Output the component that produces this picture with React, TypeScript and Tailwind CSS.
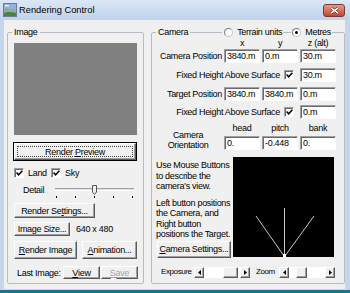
import React from 'react';

const raised =
  'bg-[#f0f0f0] border border-t-white border-l-white border-r-[#5a5a5a] border-b-[#5a5a5a] shadow-[inset_-1px_-1px_0_#a0a0a0]';
const sunken =
  'bg-white border border-t-[#a0a0a0] border-l-[#a0a0a0] border-r-white border-b-white shadow-[inset_1px_1px_0_#696969]';

type BoxProps = { className?: string; children?: React.ReactNode };

const Button: React.FC<BoxProps & { disabled?: boolean }> = ({ className = '', children, disabled }) => (
  <div
    className={`${raised} flex items-center justify-center whitespace-nowrap ${
      disabled ? 'text-[#a0a0a0] [text-shadow:1px_1px_0_#fff]' : ''
    } ${className}`}
  >
    {children}
  </div>
);

const Field: React.FC<{ value: string; className?: string }> = ({ value, className = '' }) => (
  <div className={`${sunken} w-[36px] h-[14px] flex items-center pl-[2px] whitespace-nowrap overflow-hidden ${className}`}>
    {value}
  </div>
);

const Check: React.FC<{ className?: string }> = ({ className = '' }) => (
  <div className={`${sunken} w-[10px] h-[10px] flex items-center justify-center shrink-0 ${className}`}>
    <svg width="7" height="6" viewBox="0 0 7 6">
      <path d="M0.6 2.6 L2.6 4.8 L6.4 0.8" stroke="#000" strokeWidth="1.5" fill="none" />
    </svg>
  </div>
);

const Radio: React.FC<{ checked?: boolean }> = ({ checked }) => (
  <div className="w-[9px] h-[9px] rounded-full bg-white border border-t-[#7a7a7a] border-l-[#7a7a7a] border-r-[#c8c8c8] border-b-[#c8c8c8] flex items-center justify-center shrink-0">
    {checked && <div className="w-[3px] h-[3px] rounded-full bg-black" />}
  </div>
);

const Line: React.FC<{ className?: string }> = ({ className = '' }) => (
  <div className={`h-0 border-t border-[#b5bcc3] ${className}`} />
);

const Arrow: React.FC<{ left?: boolean }> = ({ left }) => (
  <div className={`${raised} w-[10px] h-full flex items-center justify-center shrink-0`}>
    <svg width="3" height="5" viewBox="0 0 3 5">
      <path d={left ? 'M3 0 L0 2.5 L3 5Z' : 'M0 0 L3 2.5 L0 5Z'} fill="#000" />
    </svg>
  </div>
);

const ScrollBar: React.FC<{ lead: string; thumb: string }> = ({ lead, thumb }) => (
  <div className="flex w-[56px] h-[11px] shrink-0">
    <Arrow left />
    <div className="flex-1 flex bg-white">
      <div className={lead} />
      <div className={`${raised} ${thumb}`} />
    </div>
    <Arrow />
  </div>
);

const AppIcon = () => (
  <svg width="14" height="14" viewBox="0 0 14 14">
    <rect x="0.5" y="0.5" width="13" height="13" fill="#8fb3d9" stroke="#6d7f8f" />
    <path d="M1 7 L4 4 L7 7 L9 5 L13 8 V13 H1Z" fill="#9aa3a8" />
    <path d="M1 10 Q5 8 13 10 V13 H1Z" fill="#3f8a3a" />
    <rect x="2" y="2" width="4" height="1.5" fill="#e8f0f8" />
  </svg>
);

export default function App() {
  return (
    <div className="w-[350px] h-[293px] flex flex-col bg-[#c4d6ec] text-black text-[9px] tracking-[-0.3px] leading-[10px] font-['Liberation_Sans',sans-serif] overflow-hidden">
      {/* title bar */}
      <div className="h-[20px] shrink-0 flex items-start bg-linear-to-b from-[#dbe7f6] to-[#bfd3ec]">
        <div className="ml-[3px] mt-[3px]">
          <AppIcon />
        </div>
        <div className="ml-[2px] h-[19px] flex items-center text-[9.3px] tracking-normal">Rendering Control</div>
        <div className="ml-auto mr-[5px] mt-[4px] w-[22px] h-[13px] rounded-[3px] border border-[#7d3a32] bg-linear-to-b from-[#e49a8a] to-[#c4432f] flex items-center justify-center">
          <svg width="9" height="7" viewBox="0 0 9 7">
            <path d="M1 0.8 L8 6.2 M8 0.8 L1 6.2" stroke="#5a231c" strokeWidth="2.6" />
            <path d="M1 0.8 L8 6.2 M8 0.8 L1 6.2" stroke="#fff" strokeWidth="1.5" />
          </svg>
        </div>
      </div>

      {/* client */}
      <div className="h-[269px] ml-[4px] mr-[5px] bg-[#f0f0f0] flex items-start pt-[6px]">
        {/* Image group */}
        <fieldset className="ml-[3px] w-[137px] h-[258px] pl-[6px] border border-[#b5bcc3] rounded-[2px]">
          <legend className="ml-[-2px] px-[2px] h-[12px] leading-[12px]">Image</legend>
          <div className="mt-[5px] w-[123px] h-[92px] bg-[#808080]" />
          <div className="mt-[7px] ml-[-1px] w-[124px] h-[19px] border border-black">
            <div className={`${raised} h-full p-[2px]`}>
              <div className="h-full border border-dotted border-[#444] flex items-center justify-center">
                Render&nbsp;<u>P</u>review
              </div>
            </div>
          </div>
          <div className="mt-[6px] h-[11px] flex items-center">
            <Check />
            <span className="ml-[4px] w-[23px]">Land</span>
            <Check />
            <span className="ml-[4px]">Sky</span>
          </div>
          <div className="mt-[6px] h-[15px] flex items-start">
            <div className="w-[41px] pl-[9px] h-[11px] flex items-center">Detail</div>
            <div className="relative w-[79px] h-[15px]">
              <div className="mt-[4px] h-[3px] border-t border-t-[#a0a0a0] border-b border-b-white bg-[#e3e3e3]" />
              <div className="mt-[5px] px-[1px] flex justify-between">
                <div className="w-[1px] h-[2px] bg-black" />
                <div className="w-[1px] h-[2px] bg-black" />
                <div className="w-[1px] h-[2px] bg-black" />
                <div className="w-[1px] h-[2px] bg-black" />
                <div className="w-[1px] h-[2px] bg-black" />
              </div>
              <svg className="absolute left-[37px] top-[1px]" width="5" height="10" viewBox="0 0 5 10">
                <path d="M0.5 0.5 H4.5 V7 L2.5 9.5 L0.5 7 Z" fill="#f0f0f0" stroke="#555" />
              </svg>
            </div>
          </div>
          <Button className="mt-[4px] w-[81px] h-[15px]">
            Render Se<u>t</u>tings...
          </Button>
          <div className="mt-[4px] h-[14px] flex items-center">
            <Button className="w-[56px] h-[14px]">Image Size...</Button>
            <span className="ml-[6px]">640 x 480</span>
          </div>
          <div className="mt-[5px] h-[18px] flex">
            <Button className="w-[63px] h-[18px]">
              <u>R</u>ender Image
            </Button>
            <Button className="ml-[5px] w-[55px] h-[18px]">
              <u>A</u>nimation...
            </Button>
          </div>
          <div className="mt-[7px] h-[13px] flex items-center">
            <div className="w-[49px] pl-[3px] whitespace-nowrap">Last Image:</div>
            <Button className="w-[37px] h-[13px]">
              <u>V</u>iew
            </Button>
            <Button disabled className="ml-[1px] w-[37px] h-[13px]">
              <u>S</u>ave
            </Button>
          </div>
        </fieldset>

        {/* Camera group */}
        <fieldset className="ml-[7px] w-[194px] h-[258px] pl-[4px] pr-[1px] border border-[#b5bcc3] rounded-[2px]">
          <legend className="w-full h-[12px] flex items-center">
            <span className="px-[2px] whitespace-nowrap">Camera</span>
            <Line className="flex-1" />
            <div className="ml-[2px]">
              <Radio />
            </div>
            <span className="ml-[4px] whitespace-nowrap">Terrain units</span>
            <Line className="w-[8px] mx-[1px]" />
            <Radio checked />
            <span className="ml-[4px] whitespace-nowrap">Metres</span>
            <Line className="w-[11px] ml-[1px]" />
          </legend>

          <div className="flex h-[10px] items-center">
            <div className="w-[68px]" />
            <div className="w-[36px] text-center">x</div>
            <div className="w-[36px] ml-[2px] text-center">y</div>
            <div className="w-[36px] ml-[2px] text-center">z (alt)</div>
          </div>
          <div className="flex h-[14px] items-center mt-[1px]">
            <div className="w-[68px] pr-[2px] text-right whitespace-nowrap">Camera Position</div>
            <Field value="3840.m" />
            <Field value="0.m" className="ml-[2px]" />
            <Field value="30.m" className="ml-[2px]" />
          </div>
          <div className="flex h-[14px] items-center mt-[5px]">
            <div className="w-[144px] pr-[6px] flex justify-end items-center whitespace-nowrap">
              <span>Fixed Height Above Surface</span>
              <Check className="ml-[4px]" />
            </div>
            <Field value="30.m" />
          </div>
          <div className="flex h-[14px] items-center mt-[5px]">
            <div className="w-[68px] pr-[2px] text-right whitespace-nowrap">Target Position</div>
            <Field value="3840.m" />
            <Field value="3840.m" className="ml-[2px]" />
            <Field value="0.m" className="ml-[2px]" />
          </div>
          <div className="flex h-[14px] items-center mt-[4px]">
            <div className="w-[144px] pr-[6px] flex justify-end items-center whitespace-nowrap">
              <span>Fixed Height Above Surface</span>
              <Check className="ml-[4px]" />
            </div>
            <Field value="0.m" />
          </div>
          <div className="flex items-end mt-[4px]">
            <div className="w-[68px] pr-[4px] text-center">
              Camera
              <br />
              Orientation
            </div>
            <div>
              <div className="flex h-[10px] items-center">
                <div className="w-[36px] text-center">head</div>
                <div className="w-[36px] ml-[2px] text-center">pitch</div>
                <div className="w-[36px] ml-[2px] text-center">bank</div>
              </div>
              <div className="flex h-[14px] items-center mt-[3px]">
                <Field value="0." />
                <Field value="-0.448" className="ml-[2px]" />
                <Field value="0." className="ml-[2px]" />
              </div>
            </div>
          </div>

          <div className="flex items-start mt-[7px]">
            <div className="w-[77px] flex flex-col whitespace-nowrap">
              <p className="pt-[3px] leading-[10.5px]">
                Use Mouse Buttons
                <br />
                to describe the
                <br />
                camera's view.
              </p>
              <p className="mt-[6px] leading-[10.5px]">
                Left button positions
                <br />
                the Camera, and
                <br />
                Right button
                <br />
                positions the Target.
              </p>
              <Button className="mt-[1px] ml-[1px] w-[74px] h-[17px]">
                <u>C</u>amera Settings...
              </Button>
            </div>
            <svg width="101" height="100" viewBox="0 0 101 100" className="bg-black shrink-0">
              <g stroke="#c8c8c8" strokeWidth="1">
                <line x1="51" y1="99" x2="23" y2="59" />
                <line x1="51.5" y1="99" x2="51.5" y2="51" />
                <line x1="52" y1="99" x2="81" y2="59" />
              </g>
              <rect x="50" y="97" width="3" height="3" fill="#fff" />
            </svg>
          </div>

          <div className="flex items-center h-[11px] mt-[9px]">
            <div className="w-[38px] pl-[5px] text-[8px] tracking-[-0.4px]">Exposure</div>
            <ScrollBar lead="w-[19px]" thumb="w-[15px]" />
            <div className="w-[29px] pl-[6px] text-[8px] tracking-[-0.4px]">Zoom</div>
            <ScrollBar lead="w-[7px]" thumb="w-[11px]" />
          </div>
        </fieldset>
      </div>

      <div className="h-[4px] shrink-0 bg-[#c4d6ec] border-b-[3px] border-[#1d7292]" />
    </div>
  );
}
